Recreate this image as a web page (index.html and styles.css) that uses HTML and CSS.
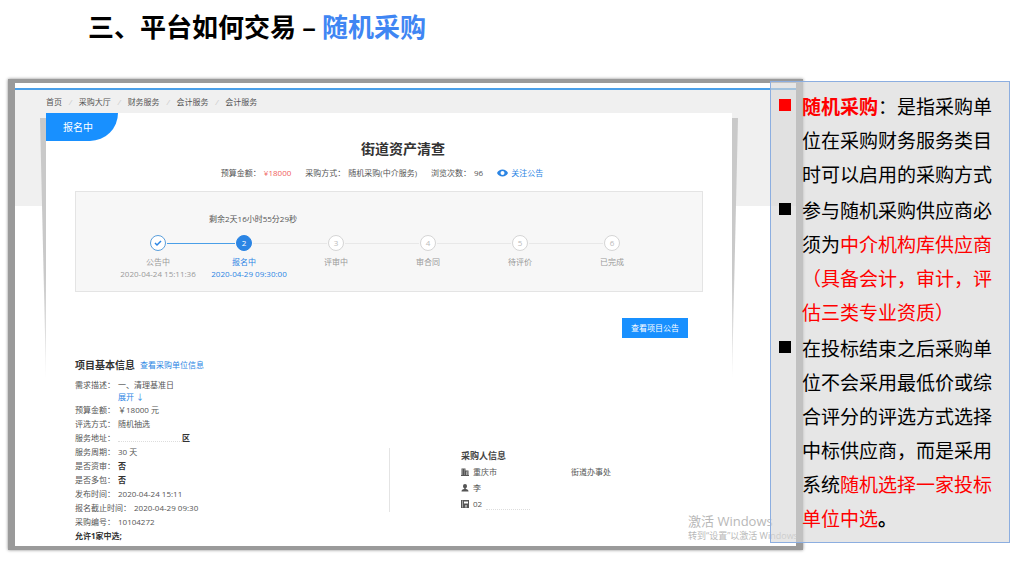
FILE: index.html
```html
<!DOCTYPE html>
<html lang="zh-CN">
<head>
<meta charset="utf-8">
<meta name="viewport" content="width=device-width, initial-scale=1">
<title>三、平台如何交易 – 随机采购</title>
<link rel="stylesheet" href="styles.css">
</head>
<body>
<h1 class="slide-title">三、平台如何交易 – <span class="slide-title-accent">随机采购</span></h1>
<main class="slide">
  <section class="frame">
    <nav class="crumbs" aria-label="面包屑">
      <a href="#">首页</a><i>/</i><a href="#">采购大厅</a><i>/</i><a href="#">财务服务</a><i>/</i><a href="#">会计服务</a><i>/</i><a href="#">会计服务</a>
    </nav>
    <article class="card">
      <span class="badge">报名中</span>
      <h2 class="card-title">街道资产清查</h2>
      <div class="meta">
        <span class="meta-item">预算金额：<b class="price">¥18000</b></span>
        <span class="meta-item">采购方式：<span>随机采购(中介服务)</span></span>
        <span class="meta-item">浏览次数：<span>96</span></span>
        <a class="meta-item follow" href="#">
          <svg width="11" height="8" viewBox="0 0 22 16" aria-hidden="true"><path fill="currentColor" fill-rule="evenodd" d="M11 1C6 1 2 4 0 8c2 4 6 7 11 7s9-3 11-7c-2-4-6-7-11-7zm0 3a4 4 0 1 1 0 8 4 4 0 0 1 0-8z"/></svg>
          关注公告</a>
      </div>
      <div class="progress">
        <p class="countdown">剩余2天16小时55分29秒</p>
        <ol class="steps">
          <li class="step step-done">
            <div class="step-head"><span class="dot"><svg width="8" height="8" viewBox="0 0 16 16" aria-hidden="true"><path d="M2 8l4 4 8-8" fill="none" stroke="currentColor" stroke-width="3"/></svg></span></div>
            <div>公告中</div><time>2020-04-24 15:11:36</time>
          </li>
          <li class="step step-current">
            <div class="step-head"><span class="dot">2</span></div>
            <div>报名中</div><time>2020-04-29 09:30:00</time>
          </li>
          <li class="step"><div class="step-head"><span class="dot">3</span></div><div>评审中</div></li>
          <li class="step"><div class="step-head"><span class="dot">4</span></div><div>审合同</div></li>
          <li class="step"><div class="step-head"><span class="dot">5</span></div><div>待评价</div></li>
          <li class="step"><div class="step-head"><span class="dot">6</span></div><div>已完成</div></li>
        </ol>
      </div>
      <div class="actions"><button class="primary" type="button">查看项目公告</button></div>
      <div class="section-head">
        <h3>项目基本信息</h3><a href="#">查看采购单位信息</a>
      </div>
      <div class="details">
        <dl class="facts">
          <div class="fact fact-tall"><dt>需求描述：</dt><dd>一、清理基准日<br><a href="#">展开 ↓</a></dd></div>
          <div class="fact"><dt>预算金额：</dt><dd>￥18000 元</dd></div>
          <div class="fact"><dt>评选方式：</dt><dd>随机抽选</dd></div>
          <div class="fact"><dt>服务地址：</dt><dd class="address"><span class="erased"></span><b>区</b></dd></div>
          <div class="fact"><dt>服务周期：</dt><dd>30 天</dd></div>
          <div class="fact"><dt>是否资审：</dt><dd><b>否</b></dd></div>
          <div class="fact"><dt>是否多包：</dt><dd><b>否</b></dd></div>
          <div class="fact"><dt>发布时间：</dt><dd>2020-04-24 15:11</dd></div>
          <div class="fact"><dt>报名截止时间：</dt><dd>2020-04-29 09:30</dd></div>
          <div class="fact"><dt>采购编号：</dt><dd>10104272</dd></div>
          <div class="fact"><dt><b>允许1家中选;</b></dt></div>
        </dl>
        <div class="buyer">
          <h4>采购人信息</h4>
          <p><svg width="8" height="8" viewBox="0 0 16 16" aria-hidden="true"><path fill="currentColor" fill-rule="evenodd" d="M1 1h8v4h6v9h1v2H0v-2h1zM3 3v2h1V3zm3 0v2h1V3zM3 7v2h1V7zm3 0v2h1V7zm-3 4v2h1v-2zm3 0v2h1v-2zm4-4v7h1V7zm2 0v2h1V7zm0 4v2h1v-2z"/></svg><span>重庆市</span><span class="office">街道办事处</span></p>
          <p><svg width="8" height="8" viewBox="0 0 16 16" aria-hidden="true"><path fill="currentColor" d="M8 0a4 4 0 0 1 4 4c0 2-1 4-2.500 4.500V10C13 10 15 12 15 15H1c0-3 2-5 5.500-5V8.500C5 8 4 6 4 4a4 4 0 0 1 4-4z"/></svg><span>李</span></p>
          <p><svg width="8" height="8" viewBox="0 0 16 16" aria-hidden="true"><path fill="currentColor" fill-rule="evenodd" d="M0 0h16v16H0zM3 1v14h1V1zm3 2v4h8V3zm2 7v5h1v-5zm3 0v5h1v-5z"/></svg><span>02</span><span class="erased erased-phone"></span></p>
        </div>
      </div>
    </article>
    <div class="watermark"><p class="watermark-main">激活 Windows</p><p>转到“设置”以激活 Windows</p></div>
  </section>
  <aside class="notes">
    <ul>
      <li class="note-lead"><p><b class="hot">随机采购</b>：是指采购单位在采购财务服务类目时可以启用的采购方式</p></li>
      <li><p>参与随机采购供应商必须为<span class="hot">中介机构库供应商（具备会计，审计，评估三类专业资质）</span></p></li>
      <li><p>在投标结束之后采购单位不会采用最低价或综合评分的评选方式选择中标供应商，而是采用系统<span class="hot">随机选择一家投标单位中选</span><b>。</b></p></li>
    </ul>
  </aside>
</main>
</body>
</html>
```

FILE: styles.css
```css
* { box-sizing: border-box; margin: 0; padding: 0; }

body {
  background: #fff;
  color: #000;
  font-family: "Open Sans", "Noto Sans CJK SC", sans-serif;
}

ul, ol { list-style: none; }
a { color: inherit; text-decoration: none; }

.slide-title {
  padding: 6px 0 0 88px;
  font: bold 26px/40px "Noto Sans CJK SC", sans-serif;
}
.slide-title-accent { color: #3f86f3; }

/* The notes panel shares the middle column with the framed page. */
.slide {
  display: grid;
  grid-template-columns: minmax(0, 1fr) 33px 207px;
  align-items: start;
  padding: 0 14px 0 8px;
  margin: 33px 0 24px;
}

.frame {
  grid-area: 1 / 1 / 2 / 3;
  position: relative;
  border: solid #9a9a9a;
  border-width: 4px 7px;
  box-shadow: 0 0 3px #888;
  padding: 0 64px 3px 31px;
  background:
    linear-gradient(#fff 5px, #4a9fe8 5px, #4a9fe8 7px, #f0f0f0 7px, #f0f0f0 123px, #fff 123px);
  font-size: 8px;
  line-height: 12px;
  color: #555;
}

.crumbs { display: flex; gap: 7px; padding-top: 13px; height: 30px; }
.crumbs i { color: #ccc; }

.card { position: relative; background: #fff; padding: 26px 29px 0; }
.card::before,
.card::after {
  content: "";
  position: absolute;
  top: 5px;
  width: 6px;
  height: 260px;
  background: linear-gradient(#c9c9c9 60%, #eee);
}
.card::before { right: 100%; clip-path: polygon(0 0, 100% 0, 100% 100%); }
.card::after { left: 100%; clip-path: polygon(0 0, 100% 0, 0 100%); }

.badge {
  position: absolute;
  top: 0;
  left: 0;
  width: 72px;
  padding-left: 17px;
  border-bottom-right-radius: 28px;
  background: #1890ff;
  color: #fff;
  font-size: 10px;
  line-height: 28px;
}

.card-title { padding-left: 28px; text-align: center; font-size: 14px; line-height: 20px; color: #333; }

.meta { display: flex; justify-content: center; gap: 14px; margin-top: 8px; padding-right: 14px; }
.meta-item { display: flex; align-items: center; gap: 3px; }
.price { font-weight: normal; color: #f0605c; }
.follow { color: #2b85e4; }

.progress {
  margin-top: 12px;
  padding: 21px 44px 11px 42px;
  border: 1px solid #e4e4e4;
  background: #f7f7f7;
}
.countdown { padding-left: 91px; }
.steps {
  display: grid;
  grid-template-columns: 80fr 92fr 92fr 92fr 92fr 92fr;
  margin-top: 10px;
  text-align: center;
  color: #999;
}
.step-head { display: flex; align-items: center; gap: 1px; margin-bottom: 5px; }
.step-head::before,
.step-head::after { content: ""; flex: 1; height: 1px; background: #e8e8e8; }
.step:first-child .step-head::before,
.step:last-child .step-head::after { background: none; }
.step-done .step-head::after,
.step-current .step-head::before { background: #4a9fe8; }
.dot {
  display: grid;
  place-items: center;
  width: 16px;
  height: 16px;
  border: 1px solid #d5d5d5;
  border-radius: 50%;
  background: #fff;
  color: #bbb;
}
.step-done .dot { border-color: #5b9fdc; color: #2b85e4; }
.step-current { color: #2b85e4; }
.step-current .dot { border-color: #2b85e4; background: #2b85e4; color: #fff; }
.step time { display: block; white-space: nowrap; }
.step-current time { padding-left: 10px; }

.actions { display: flex; justify-content: flex-end; margin-top: 26px; padding-right: 15px; }
.primary {
  padding: 0 9px;
  border: 0;
  background: #1890ff;
  color: #fff;
  font: 8px/20px "Open Sans", "Noto Sans CJK SC", sans-serif;
}

.section-head { display: flex; align-items: center; gap: 5px; margin-top: 19px; line-height: 16px; }
.section-head h3 { font-size: 10px; color: #333; }
.section-head a, .fact a { color: #2b85e4; }

.details { display: grid; grid-template-columns: 1fr 1fr; align-items: start; margin-top: 6px; }
.fact { display: flex; gap: 3px; line-height: 14px; }
.fact-tall { line-height: 12px; }
.fact b { color: #333; }
.address { display: flex; }
.erased { width: 64px; height: 11px; border-bottom: 1px dotted #ddd; }
.erased-phone { width: 44px; }

.buyer { margin-top: 69px; padding-left: 71px; border-left: 1px solid #e4e4e4; }
.buyer h4 { font-size: 9px; line-height: 16px; color: #444; }
.buyer p { display: flex; align-items: center; gap: 4px; line-height: 16px; }
.office { margin-left: 70px; }

.watermark {
  position: absolute;
  left: 673px;
  right: 0;
  bottom: 3px;
  overflow: hidden;
  white-space: nowrap;
  font-size: 9px;
  line-height: 14px;
  color: #b8b8b8;
}
.watermark-main { font-size: 13px; line-height: 16px; }

.notes {
  grid-area: 1 / 2 / 2 / 4;
  z-index: 1;
  margin-top: 2px;
  padding: 7px 12px 7px 8px;
  border: 1px solid #8caee0;
  background: rgba(215, 215, 215, 0.63);
  font: 19px/34px "Noto Sans CJK SC", sans-serif;
}
.notes ul { display: grid; gap: 2px; }
.notes li { display: grid; grid-template-columns: 12px 1fr; gap: 11px; }
.notes li::before { content: ""; height: 12px; margin-top: 10px; background: #000; }
.notes .note-lead::before { background: #f00; }
.hot { color: #f00; }
```
